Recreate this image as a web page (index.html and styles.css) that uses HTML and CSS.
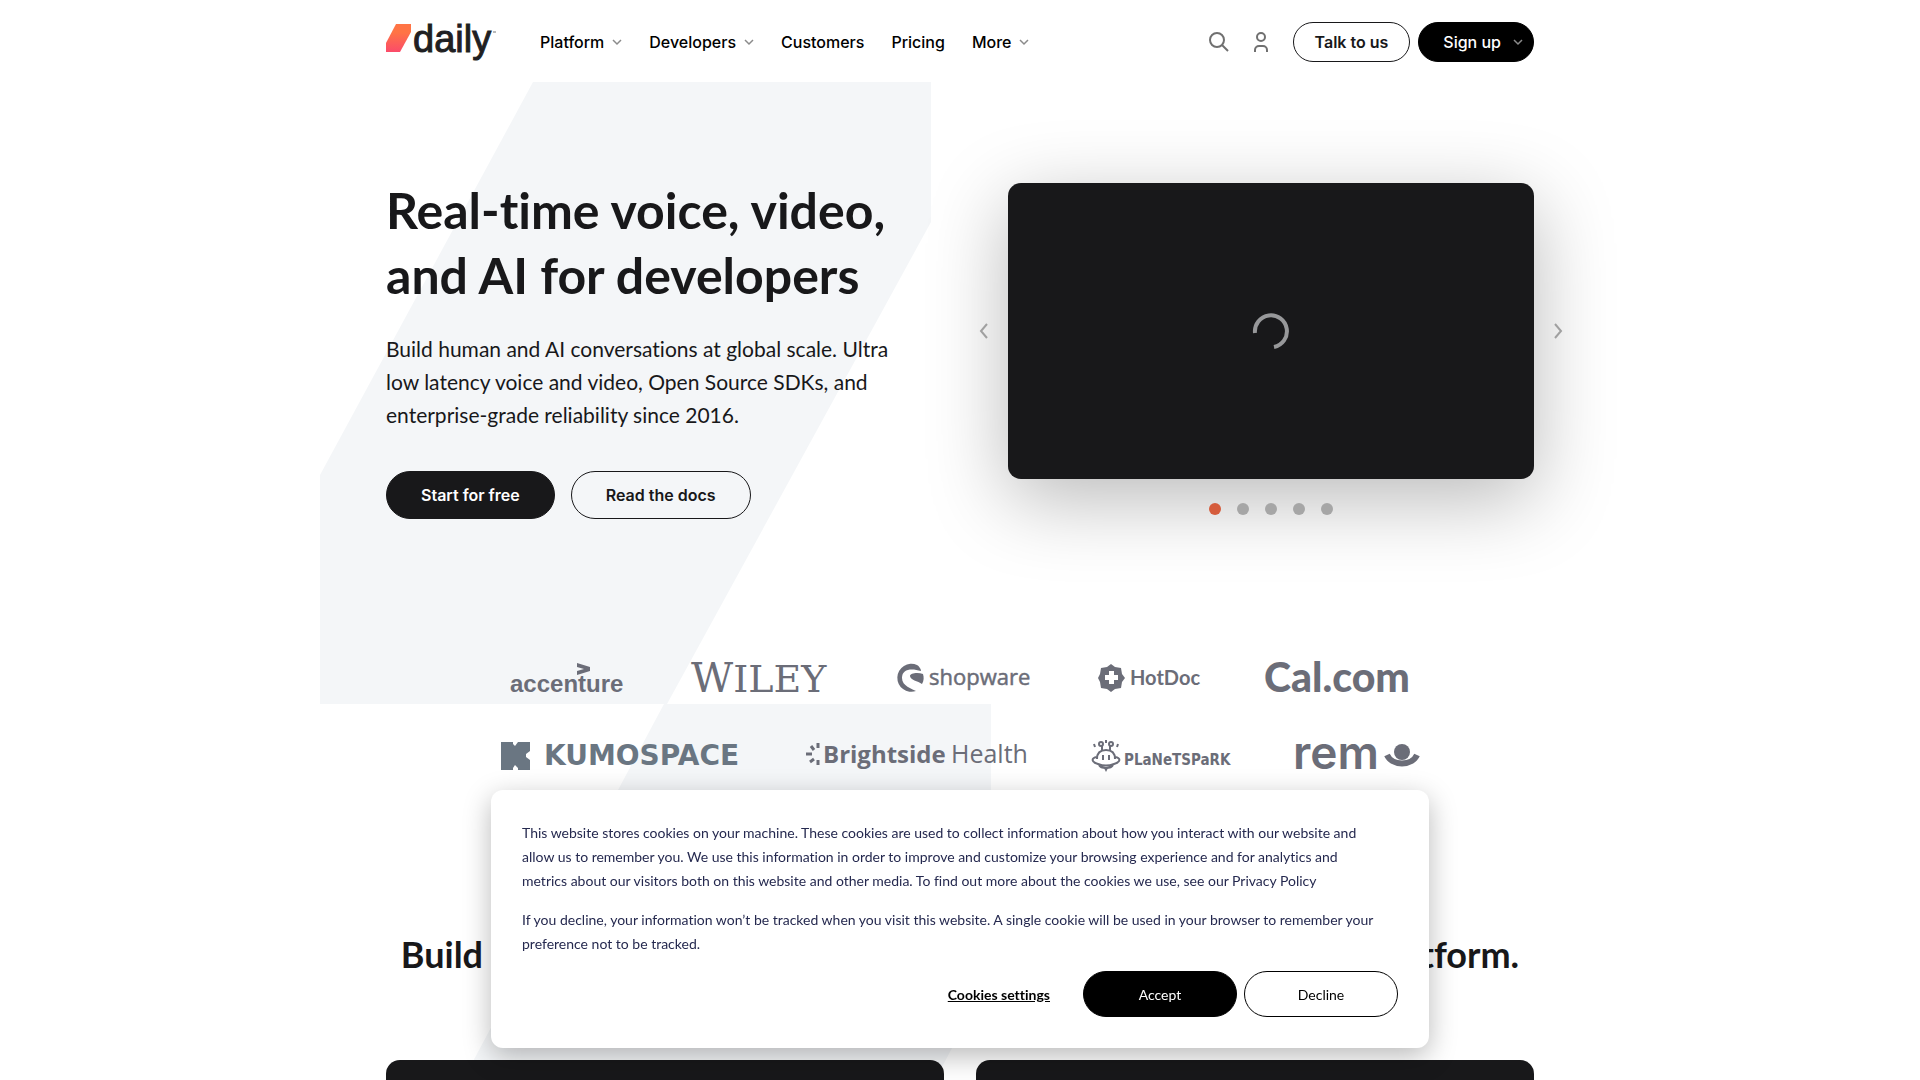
FILE: index.html
```html
<!DOCTYPE html>
<html lang="en">
<head>
    <meta charset="UTF-8">
    <meta name="viewport" content="width=device-width, initial-scale=1.0">
    <title>Daily | Real-time voice, video, and AI for developers</title>
    <link rel="stylesheet" href="styles.css">
</head>
<body>
    <header class="header container">
        <a class="logo" href="#" aria-label="Daily home">
            <svg width="112" height="44" viewBox="0 0 112 44">
                <defs>
                    <linearGradient id="brand" x1="0" y1="0" x2="0" y2="1">
                        <stop offset="0.3" stop-color="#ff7445"/>
                        <stop offset="1" stop-color="#fb4b6a"/>
                    </linearGradient>
                </defs>
                <path d="M10 4H25V12L14 32H0V23Z" fill="url(#brand)"/>
                <text class="logo-text" x="27" y="32">daily</text>
                <path d="M107 12h3" stroke="#777" stroke-width="1"/>
            </svg>
        </a>
        <nav class="nav">
            <a href="#">Platform <svg class="chevron" viewBox="0 0 10 6"><path d="M1 1l4 4 4-4"/></svg></a>
            <a href="#">Developers <svg class="chevron" viewBox="0 0 10 6"><path d="M1 1l4 4 4-4"/></svg></a>
            <a href="#">Customers</a>
            <a href="#">Pricing</a>
            <a href="#">More <svg class="chevron" viewBox="0 0 10 6"><path d="M1 1l4 4 4-4"/></svg></a>
        </nav>
        <div class="actions">
            <button class="icon-btn" type="button" aria-label="Search">
                <svg width="20" height="20" viewBox="0 0 20 20"><circle cx="8" cy="8" r="7"/><path d="M13 13l6 6"/></svg>
            </button>
            <a class="icon-btn" href="#" aria-label="Sign in">
                <svg width="20" height="20" viewBox="0 0 20 20"><circle cx="10" cy="5" r="4"/><path d="M4 20v-2a4 4 0 0 1 4-4h4a4 4 0 0 1 4 4v2"/></svg>
            </a>
            <a class="btn btn-small btn-outline" href="#">Talk to us</a>
            <a class="btn btn-small btn-signup" href="#">Sign up <svg class="chevron" viewBox="0 0 10 6"><path d="M1 1l4 4 4-4"/></svg></a>
        </div>
    </header>

    <main class="main">
        <!-- Slanted shapes behind the hero and the logos -->
        <svg class="backdrop" width="1280" height="998" viewBox="0 0 1280 998" aria-hidden="true">
            <path d="M213 0H611V140L347 622H0V393Z"/>
            <path d="M344 622H671V893L615 998H143Z"/>
        </svg>

        <section class="hero container">
            <div class="hero-copy">
                <h1>Real-time voice, video, and AI for developers</h1>
                <p>Build human and AI conversations at global scale. Ultra low latency voice and video, Open Source SDKs, and enterprise-grade reliability since 2016.</p>
                <div class="hero-buttons">
                    <a class="btn btn-dark" href="#">Start for free</a>
                    <a class="btn btn-outline" href="#">Read the docs</a>
                </div>
            </div>
            <div class="carousel">
                <button class="arrow" type="button" aria-label="Previous slide">
                    <svg width="10" height="16" viewBox="0 0 10 16"><path d="M8 1L2 8l6 7"/></svg>
                </button>
                <div class="slide">
                    <svg width="36" height="36" viewBox="0 0 36 36"><path d="M2 20A16 16 0 1 1 21 34"/></svg>
                </div>
                <button class="arrow" type="button" aria-label="Next slide">
                    <svg width="10" height="16" viewBox="0 0 10 16"><path d="M2 1l6 7-6 7"/></svg>
                </button>
                <div class="dots">
                    <button class="dot active" type="button" aria-label="Slide 1"></button>
                    <button class="dot" type="button" aria-label="Slide 2"></button>
                    <button class="dot" type="button" aria-label="Slide 3"></button>
                    <button class="dot" type="button" aria-label="Slide 4"></button>
                    <button class="dot" type="button" aria-label="Slide 5"></button>
                </div>
            </div>
        </section>

        <section class="brands container">
            <div class="brand-row">
                <svg width="117" height="34" viewBox="0 0 117 34">
                    <text class="t-accenture" x="0" y="31">accenture</text>
                    <path d="M67 2l13 4v4l-13 4v-4l7-2-7-2z"/>
                </svg>
                <svg width="140" height="34" viewBox="0 0 140 34">
                    <text class="t-wiley" x="0" y="31"><tspan class="t-wiley-big">W</tspan>ILEY</text>
                </svg>
                <svg width="139" height="34" viewBox="0 0 139 34">
                    <path d="M22 4A14 14 0 1 0 21 30C17 28 7 25 7 17C7 8 16 7 26 10C26 8 24 5 22 4Z"/>
                    <path d="M28 13C23 11 15 12 15 15C15 19 23 20 27 23C29 20 29 16 28 13Z"/>
                    <text class="t-shopware" x="34" y="24">shopware</text>
                </svg>
                <svg width="102" height="34" viewBox="0 0 102 34">
                    <path d="M13 3L17 6L23 7L24 13L27 17L24 21L23 27L17 28L13 31L9 28L3 27L2 21L0 17L2 13L3 7L9 6Z"/>
                    <path class="plus" d="M11 10h5v4h4v5h-4v4h-5v-4H7v-5h4z"/>
                    <text class="t-hotdoc" x="32" y="24">HotDoc</text>
                </svg>
                <svg width="147" height="34" viewBox="0 0 147 34">
                    <text class="t-cal" x="0" y="31">Cal.com</text>
                </svg>
            </div>
            <div class="brand-row">
                <svg class="kumo" width="240" height="34" viewBox="0 0 240 34">
                    <path d="M0 3h12v2l2 2 3-4h12v9l-4 3v3l4 3v10H17v-2l-3-3-2 3v2H0z"/>
                    <text class="t-kumo" x="43" y="26">KUMOSPACE</text>
                </svg>
                <svg width="223" height="34" viewBox="0 0 223 34">
                    <path class="rays" d="M13 4v5M6 7l3 4M1 15h6M5 23l4-3M13 21v5"/>
                    <text class="t-bright" x="18" y="24">Brightside</text>
                    <text class="t-health" x="146" y="24">Health</text>
                </svg>
                <svg width="139" height="34" viewBox="0 0 139 34">
                    <path class="robot" d="M5 20C5 14 8 11 14 11S23 14 23 20M5 18C-1 19-1 23 6 25C11 27 17 27 22 25C29 23 29 19 23 18M7 26C9 30 19 30 21 26M10 11V7M18 11V7M14 4V1M3 8L2 5M25 8L26 5"/>
                    <circle class="robot" cx="9" cy="5" r="2"/>
                    <circle class="robot" cx="19" cy="5" r="2"/>
                    <path d="M10 16h2v5h-2zM16 16h2v5h-2zM12 29h4l-2 4z"/>
                    <text class="t-planet" x="32" y="26">PLaNeTSPaRK</text>
                </svg>
                <svg width="125" height="34" viewBox="0 0 125 34">
                    <text class="t-remo" x="-2" y="30">rem</text>
                    <circle cx="107" cy="13" r="8"/>
                    <path class="smile" d="M92 16A16 13 0 0 0 122 16"/>
                </svg>
            </div>
        </section>

        <section class="platform container">
            <h2>Build real-time voice, video and AI features on our developer platform.</h2>
            <div class="cards">
                <article class="card"></article>
                <article class="card"></article>
            </div>
        </section>
    </main>

    <div class="cookie-banner" role="dialog" aria-label="Cookie notice">
        <p>This website stores cookies on your machine. These cookies are used to collect information about how you interact with our website and allow us to remember you. We use this information in order to improve and customize your browsing experience and for analytics and metrics about our visitors both on this website and other media. To find out more about the cookies we use, see our Privacy Policy</p>
        <p>If you decline, your information won’t be tracked when you visit this website. A single cookie will be used in your browser to remember your preference not to be tracked.</p>
        <div class="cookie-actions">
            <button class="cookie-settings" type="button">Cookies settings</button>
            <button class="cookie-btn cookie-accept" type="button">Accept</button>
            <button class="cookie-btn" type="button">Decline</button>
        </div>
    </div>
</body>
</html>
```
FILE: styles.css
```css
* {
    box-sizing: border-box;
}
body {
    margin: 0;
    font-family: Inter, "Liberation Sans", sans-serif;
    font-variant-ligatures: no-common-ligatures;
    color: #18181a;
    background-color: #fff;
}
a {
    color: inherit;
    text-decoration: none;
}
button {
    font-family: inherit;
    font-variant-ligatures: inherit;
    cursor: pointer;
}
svg {
    display: block;
    flex-shrink: 0;
    overflow: visible;
}
.container {
    width: 100%;
    max-width: 1148px;
    margin: 0 auto;
}

/* Header */
.header {
    display: flex;
    align-items: center;
    height: 82px;
    padding-top: 2px;
}
.logo-text {
    font: 38px "Liberation Sans", Arial, sans-serif;
    fill: #1f1f22;
    stroke: #1f1f22;
    stroke-width: 1px;
}
.nav {
    display: flex;
    gap: 27px;
    margin-left: 42px;
    font-size: 16px;
    font-weight: 500;
    color: #000;
}
.nav a {
    display: flex;
    align-items: center;
    gap: 8px;
}
.chevron {
    width: 10px;
    height: 6px;
    fill: none;
    stroke: #8b8b8b;
    stroke-width: 1.5;
}
.actions {
    display: flex;
    align-items: center;
    margin-left: auto;
}
.icon-btn {
    padding: 0;
    margin-right: 22px;
    border: none;
    background: none;
}
.icon-btn svg {
    fill: none;
    stroke: #707070;
    stroke-width: 2;
}
.btn {
    display: inline-flex;
    align-items: center;
    height: 48px;
    padding: 0 34px;
    border: 1px solid #18181a;
    border-radius: 24px;
    font-size: 16px;
    font-weight: 600;
}
.btn-small {
    height: 40px;
    padding: 0 21px;
}
.btn-dark {
    background-color: #18181a;
    color: #fff;
}
.btn-signup {
    gap: 12px;
    margin-left: 8px;
    padding: 0 10px 0 24px;
    background-color: #000;
    border-color: #000;
    color: #fff;
    font-weight: 500;
}

/* Hero */
.main {
    position: relative;
    overflow: hidden;
}
.backdrop {
    position: absolute;
    top: 0;
    left: 50%;
    margin-left: -640px;
    z-index: -1;
    fill: #f4f6f8;
}
.hero {
    display: flex;
    justify-content: space-between;
    padding-top: 96px;
}
.hero-copy {
    width: 520px;
}
h1 {
    margin: 0;
    font-family: Lato, sans-serif;
    font-size: 50px;
    font-weight: 700;
    line-height: 65px;
}
.hero-copy p {
    margin: 24px 0 40px;
    font-family: Lato, sans-serif;
    font-size: 21px;
    line-height: 33px;
}
.hero-buttons {
    display: flex;
    gap: 16px;
}
.carousel {
    display: grid;
    grid-template-columns: 16px 526px 16px;
    gap: 24px 16px;
    align-content: start;
    align-items: center;
    justify-items: center;
    margin: 5px -32px 0 0;
}
.slide {
    display: flex;
    align-items: center;
    justify-content: center;
    width: 100%;
    height: 296px;
    border-radius: 13px;
    background-color: #18181a;
    box-shadow: 0 20px 80px rgba(0, 0, 0, 0.28);
}
.slide svg {
    fill: none;
    stroke: #97989a;
    stroke-width: 4;
}
.arrow {
    padding: 0;
    border: none;
    background: none;
    z-index: 1;
}
.arrow svg {
    fill: none;
    stroke: #a0a0a0;
    stroke-width: 2;
}
.dots {
    grid-column: 2;
    display: flex;
    gap: 16px;
    z-index: 1;
}
.dot {
    width: 12px;
    height: 12px;
    padding: 0;
    border: none;
    border-radius: 50%;
    background-color: #a6a6a6;
}
.dot.active {
    background-color: #d55c3c;
}

/* Customer logos */
.brands {
    display: grid;
    gap: 44px;
    padding-top: 142px;
}
.brand-row {
    display: flex;
    justify-content: center;
    gap: 64px;
    fill: #6b6d78;
}
.t-accenture {
    font: bold 24px "Liberation Sans", sans-serif;
}
.t-wiley {
    font: 38px "DejaVu Serif", serif;
}
.t-wiley-big {
    font-size: 41px;
}
.t-shopware {
    font: 22px "Open Sans", sans-serif;
    stroke: #6b6d78;
    stroke-width: 0.5;
}
.t-hotdoc {
    font: bold 20px Lato, sans-serif;
}
.plus {
    fill: #fff;
}
.t-cal {
    font: 900 41px Lato, sans-serif;
}
.kumo {
    fill: #6a7682;
}
.t-kumo {
    font: bold 28px "DejaVu Sans", sans-serif;
}
.rays {
    fill: none;
    stroke: #6b6d78;
    stroke-width: 3;
}
.t-bright {
    font: bold 24px "Open Sans", sans-serif;
}
.t-health {
    font: 25px "Open Sans", sans-serif;
}
.robot {
    fill: none;
    stroke: #6b6d78;
    stroke-width: 2;
}
.t-planet {
    font: bold 15px "DejaVu Sans Condensed", "DejaVu Sans", sans-serif;
}
.t-remo {
    font: 600 46px Inter, sans-serif;
}
.smile {
    fill: none;
    stroke: #6b6d78;
    stroke-width: 6;
}

/* Platform */
.platform {
    padding-top: 156px;
}
h2 {
    margin: 0 0 81px;
    font-family: Lato, sans-serif;
    font-size: 36px;
    font-weight: 700;
    line-height: 50px;
    text-align: center;
    white-space: nowrap;
}
.cards {
    display: grid;
    grid-template-columns: 1fr 1fr;
    gap: 32px;
}
.card {
    height: 320px;
    border-radius: 14px;
    background-color: #18181a;
}

/* Cookie banner */
.cookie-banner {
    position: fixed;
    right: 0;
    bottom: 32px;
    left: 0;
    z-index: 10;
    max-width: 938px;
    margin: 0 auto;
    padding: 31px;
    border-radius: 12px;
    background-color: #fff;
    box-shadow: 0 8px 28px rgba(0, 0, 0, 0.28);
    font-family: Lato, sans-serif;
    font-size: 14px;
    line-height: 24px;
    color: #25294f;
}
.cookie-banner p {
    max-width: 858px;
    margin: 0 0 15px;
}
.cookie-actions {
    display: flex;
    justify-content: flex-end;
    gap: 7px;
}
.cookie-btn {
    width: 154px;
    height: 46px;
    border: 1px solid #000;
    border-radius: 23px;
    background-color: #fff;
    color: #000;
    font-size: 14px;
}
.cookie-accept {
    background-color: #000;
    color: #fff;
}
.cookie-settings {
    margin-right: 26px;
    padding: 0;
    border: none;
    background: none;
    color: #000;
    font-size: 14px;
    font-weight: 700;
    text-decoration: underline;
}
```
